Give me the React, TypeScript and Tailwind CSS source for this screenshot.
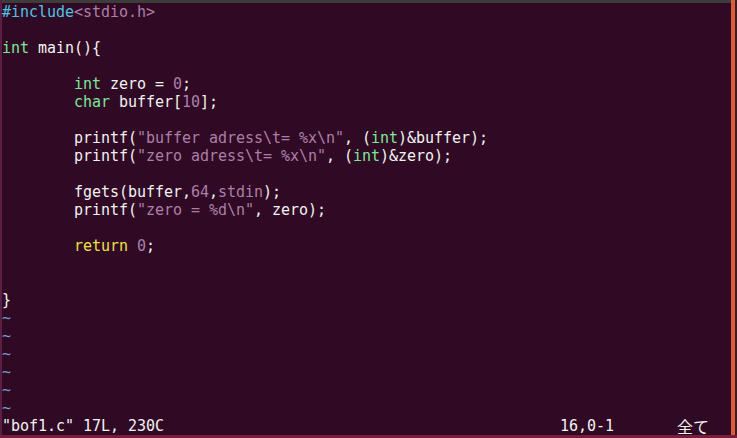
import React from 'react';

type Seg = [string, string?];

const C = {
  text: 'text-[#f2f2f2]',
  pre: 'text-[#4fc3e0]',
  type: 'text-[#7ee69a]',
  stmt: 'text-[#f0e04a]',
  konst: 'text-[#ad7fa8]',
};

const lines: Seg[][] = [
  [['#include', C.pre], ['<stdio.h>', C.konst]],
  [],
  [['int', C.type], [' main(){']],
  [],
  [['        '], ['int', C.type], [' zero = '], ['0', C.konst], [';']],
  [['        '], ['char', C.type], [' buffer['], ['10', C.konst], ['];']],
  [],
  [
    ['        printf('],
    ['"buffer adress\\t= %x\\n"', C.konst],
    [', ('],
    ['int', C.type],
    [')&buffer);'],
  ],
  [
    ['        printf('],
    ['"zero adress\\t= %x\\n"', C.konst],
    [', ('],
    ['int', C.type],
    [')&zero);'],
  ],
  [],
  [['        fgets(buffer,'], ['64', C.konst], [','], ['stdin', C.konst], [');']],
  [['        printf('], ['"zero = %d\\n"', C.konst], [', zero);']],
  [],
  [['        '], ['return', C.stmt], [' '], ['0', C.konst], [';']],
  [],
  [],
  [['}']],
];

const mono = "font-['DejaVu_Sans_Mono','Liberation_Mono',monospace]";

export default function App() {
  return (
    <div className="w-[737px] h-[438px] flex flex-col bg-[#300a24] overflow-hidden">
      <div className="flex flex-1">
        <div className="w-[2px] bg-[#5c1f42]" />
        <div className="flex-1 flex flex-col">
          <div className="h-[3px] bg-[#3e3c3a]" />
          <div
            className={`${mono} text-[15px] leading-[18px] tracking-[-0.03px] whitespace-pre ${C.text}`}
          >
            {lines.map((segs, i) => (
              <div key={i} className="h-[18px]">
                {segs.map(([t, cls], j) => (
                  <span key={j} className={cls ?? C.text}>
                    {t}
                  </span>
                ))}
              </div>
            ))}
            {Array.from({ length: 6 }).map((_, i) => (
              <div key={`t${i}`} className="h-[18px] text-[#729fcf]">
                ~
              </div>
            ))}
            {/* status line */}
            <div className="h-[18px] flex">
              <span className="w-[558px]">"bof1.c" 17L, 230C</span>
              <span className="w-[117px]">16,0-1</span>
              <span className="font-['Noto_Sans_CJK_JP',sans-serif] text-[16px] leading-[18px]">
                全て
              </span>
            </div>
          </div>
        </div>
        <div className="w-[4px] bg-[#dc5c35]" />
        <div className="w-[2px] bg-[#3a1c22]" />
      </div>
      <div className="h-[3px] bg-[#7a1d3a]" />
    </div>
  );
}
